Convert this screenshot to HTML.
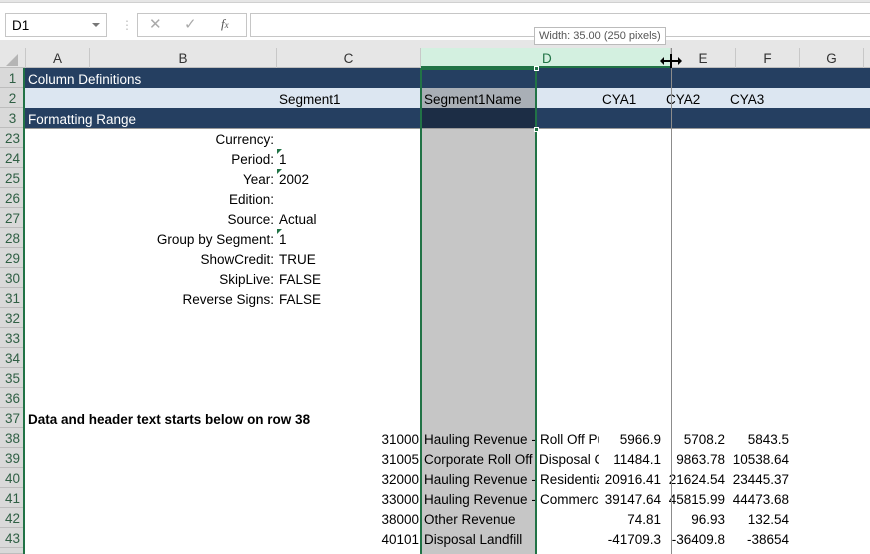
<!DOCTYPE html>
<html style="overflow:hidden;width:870px;height:554px"><head><meta charset="utf-8"><style>
*{margin:0;padding:0;box-sizing:border-box}
body{width:870px;height:554px;overflow:hidden;position:relative;background:#fff;font-family:"Liberation Sans",sans-serif;font-size:13.5px;color:#000}
div{position:absolute}
.t{height:20px;line-height:23px;white-space:nowrap;overflow:hidden}
.r{text-align:right}
.rh{left:0;width:25px;height:20px;line-height:22px;background:#d9d9d9;border-bottom:1px solid #bdbdbd;text-align:center;color:#2f5f44;font-size:13.5px}
.ch{top:48px;height:20px;line-height:21px;text-align:center;color:#333;border-right:1px solid #c8c8c8;font-size:13.5px}
</style></head><body>
<div style="left:0;top:0;width:870px;height:3px;background:#e6e6e6;border-bottom:1px solid #d0d0d0"></div>
<div style="left:5px;top:13px;width:102px;height:24px;border:1px solid #c6c6c6;background:#fff"></div>
<div style="left:12px;top:13px;height:24px;line-height:25px;font-size:13.5px">D1</div>
<div style="left:92px;top:23px;width:0;height:0;border-left:4px solid transparent;border-right:4px solid transparent;border-top:4px solid #777"></div>
<div style="left:121px;top:18px;color:#bbb;font-size:12px">⋮</div>
<div style="left:137px;top:13px;width:110px;height:24px;border:1px solid #c6c6c6"></div>
<div style="left:149px;top:15px;color:#aaa;font-size:15px">✕</div>
<div style="left:184px;top:15px;color:#aaa;font-size:15px">✓</div>
<div style="left:221px;top:16px;color:#555;font-size:13px;font-style:italic;font-family:'Liberation Serif',serif">f<span style="font-size:9px">x</span></div>
<div style="left:250px;top:13px;width:630px;height:24px;border:1px solid #c6c6c6"></div>
<div style="left:0;top:40px;width:870px;height:8px;background:#e6e6e6"></div>
<div style="left:0;top:48px;width:870px;height:20px;background:#e6e6e6;border-bottom:1px solid #bdbdbd"></div>
<div style="left:6px;top:54px;width:0;height:0;border-left:12px solid transparent;border-bottom:12px solid #b5b5b5"></div>
<div class="ch" style="left:25px;width:65px;border-left:1px solid #c8c8c8">A</div>
<div class="ch" style="left:90px;width:187px">B</div>
<div class="ch" style="left:277px;width:144px">C</div>
<div class="ch" style="left:421px;width:250px;background:#d3f0e0;color:#217346;border-bottom:2px solid #217346;text-align:left;padding-left:121px">D</div>
<div class="ch" style="left:671px;width:65px">E</div>
<div class="ch" style="left:736px;width:64px">F</div>
<div class="ch" style="left:800px;width:64px">G</div>
<div style="left:25px;top:68px;width:845px;height:20px;background:#253f61"></div>
<div style="left:25px;top:88px;width:845px;height:20px;background:#dce6f1"></div>
<div style="left:25px;top:108px;width:845px;height:20px;background:#253f61"></div>
<div style="left:421px;top:88px;width:115px;height:20px;background:#a9afb6"></div>
<div style="left:421px;top:108px;width:115px;height:20px;background:#1c2d45"></div>
<div style="left:421px;top:128px;width:115px;height:426px;background:#c6c6c6"></div>
<div style="left:25px;top:128px;width:845px;height:1px;background:#999"></div>
<div class="rh" style="top:68px">1</div>
<div class="rh" style="top:88px">2</div>
<div class="rh" style="top:108px">3</div>
<div class="rh" style="top:128px">23</div>
<div class="rh" style="top:148px">24</div>
<div class="rh" style="top:168px">25</div>
<div class="rh" style="top:188px">26</div>
<div class="rh" style="top:208px">27</div>
<div class="rh" style="top:228px">28</div>
<div class="rh" style="top:248px">29</div>
<div class="rh" style="top:268px">30</div>
<div class="rh" style="top:288px">31</div>
<div class="rh" style="top:308px">32</div>
<div class="rh" style="top:328px">33</div>
<div class="rh" style="top:348px">34</div>
<div class="rh" style="top:368px">35</div>
<div class="rh" style="top:388px">36</div>
<div class="rh" style="top:408px">37</div>
<div class="rh" style="top:428px">38</div>
<div class="rh" style="top:448px">39</div>
<div class="rh" style="top:468px">40</div>
<div class="rh" style="top:488px">41</div>
<div class="rh" style="top:508px">42</div>
<div class="rh" style="top:528px">43</div>
<div class="rh" style="top:548px;height:6px"></div>
<div style="left:23px;top:68px;width:2px;height:486px;background:#217346"></div>
<div class="t" style="left:28px;top:68px;color:#fff">Column Definitions</div>
<div class="t" style="left:279px;top:88px">Segment1</div>
<div class="t" style="left:424px;top:88px">Segment1Name</div>
<div class="t" style="left:602px;top:88px">CYA1</div>
<div class="t" style="left:666px;top:88px">CYA2</div>
<div class="t" style="left:730px;top:88px">CYA3</div>
<div class="t" style="left:28px;top:108px;color:#fff">Formatting Range</div>
<div class="t r" style="left:90px;width:184px;top:128px">Currency:</div>
<div class="t r" style="left:90px;width:184px;top:148px">Period:</div>
<div class="t r" style="left:90px;width:184px;top:168px">Year:</div>
<div class="t r" style="left:90px;width:184px;top:188px">Edition:</div>
<div class="t r" style="left:90px;width:184px;top:208px">Source:</div>
<div class="t r" style="left:90px;width:184px;top:228px">Group by Segment:</div>
<div class="t r" style="left:90px;width:184px;top:248px">ShowCredit:</div>
<div class="t r" style="left:90px;width:184px;top:268px">SkipLive:</div>
<div class="t r" style="left:90px;width:184px;top:288px">Reverse Signs:</div>
<div class="t" style="left:279px;top:148px">1</div>
<div class="t" style="left:279px;top:168px">2002</div>
<div class="t" style="left:279px;top:208px">Actual</div>
<div class="t" style="left:279px;top:228px">1</div>
<div class="t" style="left:279px;top:248px">TRUE</div>
<div class="t" style="left:279px;top:268px">FALSE</div>
<div class="t" style="left:279px;top:288px">FALSE</div>
<div style="left:277px;top:149px;border-right:5px solid transparent;border-top:5px solid #217346;width:0;height:0"></div>
<div style="left:277px;top:169px;border-right:5px solid transparent;border-top:5px solid #217346;width:0;height:0"></div>
<div style="left:277px;top:229px;border-right:5px solid transparent;border-top:5px solid #217346;width:0;height:0"></div>
<div class="t" style="left:28px;top:408px;font-weight:bold">Data and header text starts below on row 38</div>
<div class="t r" style="left:300px;width:119px;top:428px">31000</div>
<div class="t r" style="left:300px;width:119px;top:448px">31005</div>
<div class="t r" style="left:300px;width:119px;top:468px">32000</div>
<div class="t r" style="left:300px;width:119px;top:488px">33000</div>
<div class="t r" style="left:300px;width:119px;top:508px">38000</div>
<div class="t r" style="left:300px;width:119px;top:528px">40101</div>
<div class="t" style="left:424px;width:112px;top:428px">Hauling Revenue - Roll</div>
<div class="t" style="left:424px;width:112px;top:448px">Corporate Roll Off</div>
<div class="t" style="left:424px;width:112px;top:468px">Hauling Revenue - Res</div>
<div class="t" style="left:424px;width:112px;top:488px">Hauling Revenue - Com</div>
<div class="t" style="left:424px;width:112px;top:508px">Other Revenue</div>
<div class="t" style="left:424px;width:112px;top:528px">Disposal Landfill</div>
<div class="t" style="left:540px;width:59px;top:428px">Roll Off Pull</div>
<div class="t" style="left:539px;width:60px;top:448px">Disposal Cost</div>
<div class="t" style="left:540px;width:59px;top:468px">Residential</div>
<div class="t" style="left:540px;width:59px;top:488px">Commercial</div>
<div class="t r" style="left:600px;width:61px;top:428px">5966.9</div>
<div class="t r" style="left:600px;width:61px;top:448px">11484.1</div>
<div class="t r" style="left:600px;width:61px;top:468px">20916.41</div>
<div class="t r" style="left:600px;width:61px;top:488px">39147.64</div>
<div class="t r" style="left:600px;width:61px;top:508px">74.81</div>
<div class="t r" style="left:600px;width:61px;top:528px">-41709.3</div>
<div class="t r" style="left:664px;width:61px;top:428px">5708.2</div>
<div class="t r" style="left:664px;width:61px;top:448px">9863.78</div>
<div class="t r" style="left:664px;width:61px;top:468px">21624.54</div>
<div class="t r" style="left:664px;width:61px;top:488px">45815.99</div>
<div class="t r" style="left:664px;width:61px;top:508px">96.93</div>
<div class="t r" style="left:664px;width:61px;top:528px">-36409.8</div>
<div class="t r" style="left:728px;width:61px;top:428px">5843.5</div>
<div class="t r" style="left:728px;width:61px;top:448px">10538.64</div>
<div class="t r" style="left:728px;width:61px;top:468px">23445.37</div>
<div class="t r" style="left:728px;width:61px;top:488px">44473.68</div>
<div class="t r" style="left:728px;width:61px;top:508px">132.54</div>
<div class="t r" style="left:728px;width:61px;top:528px">-38654</div>
<div style="left:420px;top:68px;width:2px;height:486px;background:#217346"></div>
<div style="left:535px;top:68px;width:2px;height:486px;background:#217346"></div>
<div style="left:420px;top:68px;width:117px;height:2px;background:#217346"></div>
<div style="left:534px;top:66px;width:5px;height:5px;background:#217346;border:1px solid #fff"></div>
<div style="left:534px;top:127px;width:5px;height:5px;background:#217346;border:1px solid #fff"></div>
<div style="left:671px;top:48px;width:1px;height:506px;background:#8c8c8c"></div>
<div style="left:662px;top:60px;width:18px;height:2px;background:#000"></div>
<div style="left:670px;top:54px;width:2px;height:14px;background:#000"></div>
<div style="left:660px;top:57px;width:0;height:0;border-top:4px solid transparent;border-bottom:4px solid transparent;border-right:4px solid #000"></div>
<div style="left:678px;top:57px;width:0;height:0;border-top:4px solid transparent;border-bottom:4px solid transparent;border-left:4px solid #000"></div>
<div style="left:534px;top:27px;width:132px;height:18px;border:1px solid #bbb;background:#fff;font-size:11px;line-height:16px;padding-left:4px;color:#555">Width: 35.00 (250 pixels)</div>
</body></html>
